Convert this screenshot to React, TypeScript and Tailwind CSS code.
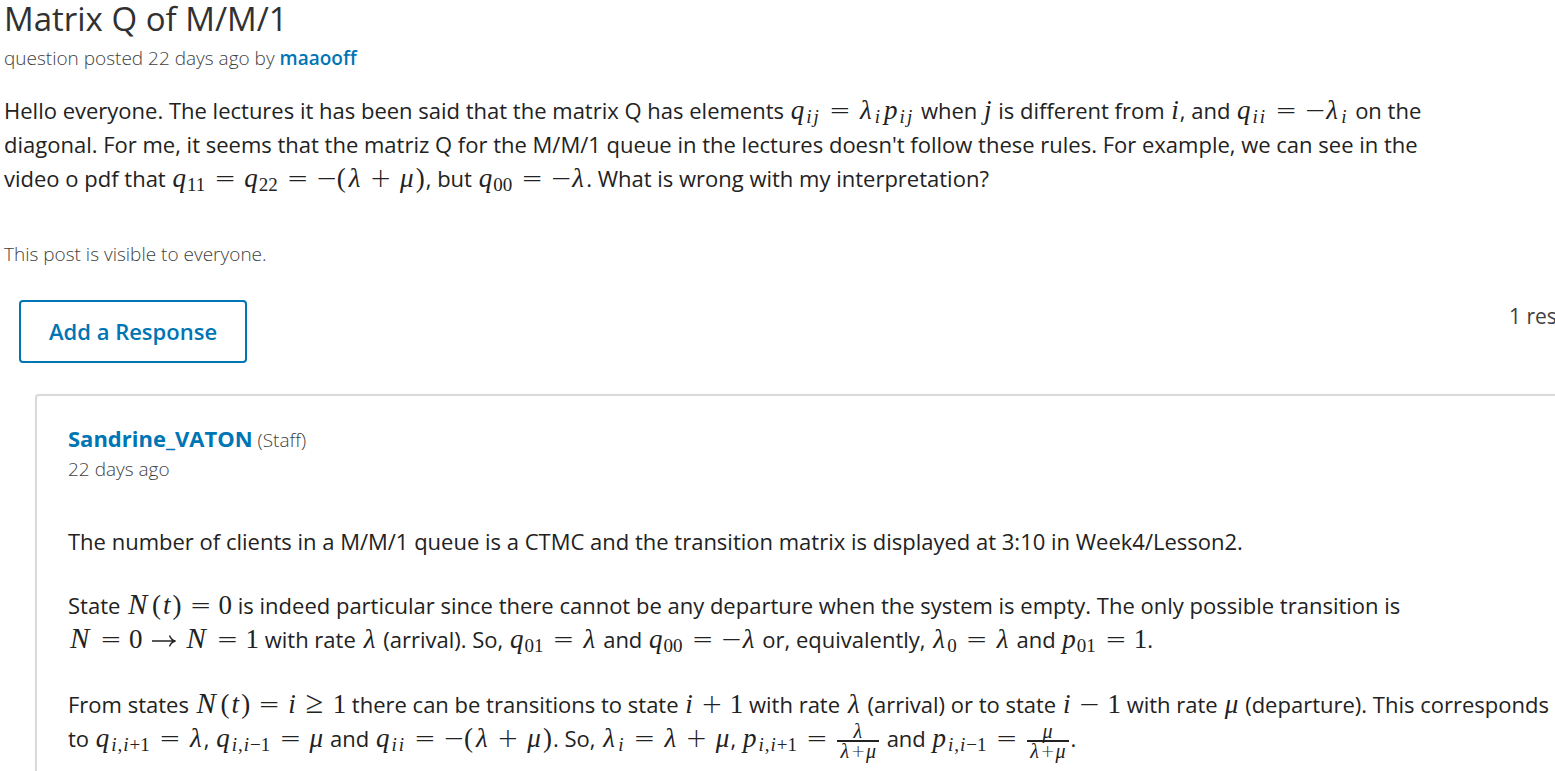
import type { ReactNode } from "react";

type Kids = { children: ReactNode };

function Formula({ children }: Kids) {
  return (
    <span className="font-['Liberation_Serif',serif] text-[27px] leading-none text-[#222222]">
      {children}
    </span>
  );
}

function Var({ children }: Kids) {
  return <i className="px-px">{children}</i>;
}

function Greek({ children }: Kids) {
  return <i className="inline-block w-4 text-center">{children}</i>;
}

function Cap({ children }: Kids) {
  return <i className="inline-block w-[25px] pl-0.5 text-[29px] leading-none">{children}</i>;
}

function Paren({ children }: Kids) {
  return <span className="inline-block w-[11px] text-center">{children}</span>;
}

function Sub({ children }: Kids) {
  return <span className="relative top-1 pr-0.5 text-[19px] leading-none">{children}</span>;
}

function Rel({ children }: Kids) {
  return (
    <span className="mx-1.5 inline-block w-6 text-center font-['DejaVu_Sans',sans-serif] text-[26px] leading-none font-extralight">
      {children}
    </span>
  );
}

function Geq() {
  return <span className="mx-1.5 inline-block w-6 text-center text-[32px] leading-none">≥</span>;
}

function Arrow() {
  return (
    <svg role="img" aria-label="→" viewBox="0 0 26 14" className="mx-2 inline-block h-3.5 w-[26px] align-baseline" fill="none" stroke="#222222" strokeWidth="1.3">
      <path d="M1 7H24M18.5 1.5Q20 6 24.5 7Q20 8 18.5 12.5" />
    </svg>
  );
}

function Neg() {
  return (
    <span className="inline-block w-5 text-center font-['DejaVu_Sans',sans-serif] text-[26px] leading-none font-extralight">
      −
    </span>
  );
}

function Fraction({ top }: { top: string }) {
  return (
    <span className="mx-0.5 inline-flex flex-col align-middle text-center text-[20px] leading-none">
      <i className="border-b-2 border-[#222222] leading-[18px]">{top}</i>
      <span className="flex justify-center px-0.5 leading-[18px]">
        <i className="w-3">λ</i>
        <span className="w-3.5 font-['DejaVu_Sans',sans-serif] text-[17px] font-extralight">+</span>
        <i className="w-3">μ</i>
      </span>
    </span>
  );
}

export default function App() {
  return (
    <main className="overflow-x-hidden bg-white font-['Open_Sans',sans-serif] text-[22px] leading-[34px] whitespace-nowrap text-[#222222]">
      <article className="pl-1">
        <h1 className="text-[33px] leading-[38px] font-normal text-[#313131]">Matrix Q of M/M/1</h1>
        <p className="mt-[5px] text-[19px] leading-[30px] font-light text-[#414141]">
          question posted 22 days ago by{" "}
          <a href="#maaooff" className="font-semibold text-[#0075b4]">maaooff</a>
        </p>
        <p className="mt-5">
          Hello everyone. The lectures it has been said that the matrix Q has elements{" "}
          <Formula><Var>q</Var><Sub><Var>i</Var><Var>j</Var></Sub><Rel>=</Rel><Greek>λ</Greek><Sub><Var>i</Var></Sub><Var>p</Var><Sub><Var>i</Var><Var>j</Var></Sub></Formula>{" "}
          when <Formula><Var>j</Var></Formula> is different from <Formula><Var>i</Var></Formula>, and{" "}
          <Formula><Var>q</Var><Sub><Var>i</Var><Var>i</Var></Sub><Rel>=</Rel><Neg /><Greek>λ</Greek><Sub><Var>i</Var></Sub></Formula> on the
          <br />
          diagonal. For me, it seems that the matriz Q for the M/M/1 queue in the lectures doesn't follow these rules. For example, we can see in the
          <br />
          video o pdf that{" "}
          <Formula><Var>q</Var><Sub>11</Sub><Rel>=</Rel><Var>q</Var><Sub>22</Sub><Rel>=</Rel><Neg /><Paren>(</Paren><Greek>λ</Greek><Rel>+</Rel><Greek>μ</Greek><Paren>)</Paren></Formula>, but{" "}
          <Formula><Var>q</Var><Sub>00</Sub><Rel>=</Rel><Neg /><Greek>λ</Greek></Formula>. What is wrong with my interpretation?
        </p>
        <p className="mt-11 text-[19px] leading-[30px] font-light text-[#414141]">This post is visible to everyone.</p>
      </article>

      <section className="-mr-20 pl-[19px]">
        <div className="mt-[31px] flex items-start justify-between pr-[18px]">
          <button type="button" className="rounded-sm border-2 border-[#0075b4] bg-white px-7 py-3 leading-[35px] font-semibold text-[#0075b4]">
            Add a Response
          </button>
          <p className="text-[21px] leading-[32px] text-[#414141]">1 response</p>
        </div>

        <article className="mt-[31px] ml-4 rounded-sm border-2 border-[#d9d9d9] px-[31px] pt-7 pb-10 shadow-[0_0_1px_#d9d9d9]">
          <header>
            <p className="text-[19px] leading-[29px] font-light text-[#414141]">
              <a href="#Sandrine_VATON" className="text-[22px] font-bold text-[#0075b4]">Sandrine_VATON</a> (Staff)
            </p>
            <p className="text-[19px] leading-[29px] font-light text-[#414141]">22 days ago</p>
          </header>
          <div className="mt-10 space-y-[30px]">
            <p>The number of clients in a M/M/1 queue is a CTMC and the transition matrix is displayed at 3:10 in Week4/Lesson2.</p>
            <p>
              State <Formula><Cap>N</Cap><Paren>(</Paren><Var>t</Var><Paren>)</Paren><Rel>=</Rel>0</Formula> is indeed particular since there cannot be any departure when the system is empty. The only possible transition is
              <br />
              <Formula><Cap>N</Cap><Rel>=</Rel>0<Arrow /><Cap>N</Cap><Rel>=</Rel>1</Formula> with rate <Formula><Greek>λ</Greek></Formula> (arrival). So,{" "}
              <Formula><Var>q</Var><Sub>01</Sub><Rel>=</Rel><Greek>λ</Greek></Formula> and{" "}
              <Formula><Var>q</Var><Sub>00</Sub><Rel>=</Rel><Neg /><Greek>λ</Greek></Formula> or, equivalently,{" "}
              <Formula><Greek>λ</Greek><Sub>0</Sub><Rel>=</Rel><Greek>λ</Greek></Formula> and{" "}
              <Formula><Var>p</Var><Sub>01</Sub><Rel>=</Rel>1</Formula>.
            </p>
            <p>
              From states <Formula><Cap>N</Cap><Paren>(</Paren><Var>t</Var><Paren>)</Paren><Rel>=</Rel><Var>i</Var><Geq />1</Formula> there can be transitions to state{" "}
              <Formula><Var>i</Var><Rel>+</Rel>1</Formula> with rate <Formula><Greek>λ</Greek></Formula> (arrival) or to state{" "}
              <Formula><Var>i</Var><Rel>−</Rel>1</Formula> with rate <Formula><Greek>μ</Greek></Formula> (departure). This corresponds
              <br />
              to <Formula><Var>q</Var><Sub><Var>i</Var>,<Var>i</Var>+1</Sub><Rel>=</Rel><Greek>λ</Greek></Formula>,{" "}
              <Formula><Var>q</Var><Sub><Var>i</Var>,<Var>i</Var>−1</Sub><Rel>=</Rel><Greek>μ</Greek></Formula> and{" "}
              <Formula><Var>q</Var><Sub><Var>i</Var><Var>i</Var></Sub><Rel>=</Rel><Neg /><Paren>(</Paren><Greek>λ</Greek><Rel>+</Rel><Greek>μ</Greek><Paren>)</Paren></Formula>. So,{" "}
              <Formula><Greek>λ</Greek><Sub><Var>i</Var></Sub><Rel>=</Rel><Greek>λ</Greek><Rel>+</Rel><Greek>μ</Greek></Formula>,{" "}
              <Formula><Var>p</Var><Sub><Var>i</Var>,<Var>i</Var>+1</Sub><Rel>=</Rel><Fraction top="λ" /></Formula> and{" "}
              <Formula><Var>p</Var><Sub><Var>i</Var>,<Var>i</Var>−1</Sub><Rel>=</Rel><Fraction top="μ" /></Formula>.
            </p>
          </div>
        </article>
      </section>
    </main>
  );
}
